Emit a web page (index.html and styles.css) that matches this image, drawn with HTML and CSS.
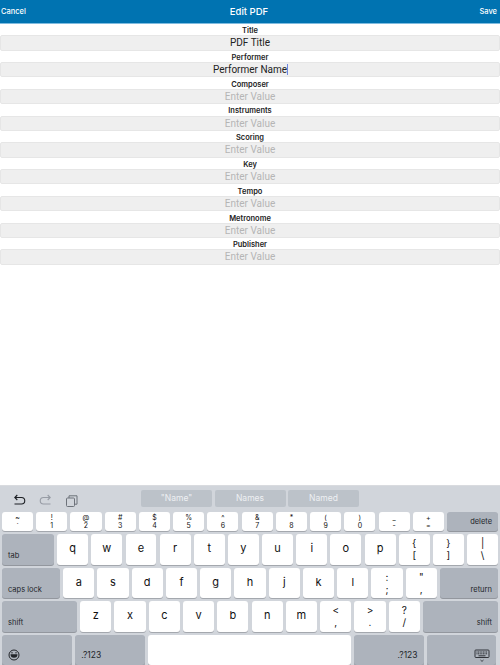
FILE: index.html
```html
<!DOCTYPE html>
<html lang="en">
<head>
  <meta charset="UTF-8">
  <meta name="viewport" content="width=device-width, initial-scale=1.0">
  <title>Edit PDF</title>
  <link rel="stylesheet" href="styles.css">
</head>
<body>
  <div class="page">
    <header class="topbar">
      <span class="topbar-btn">Cancel</span>
      <span class="topbar-title">Edit PDF</span>
      <span class="topbar-btn save">Save</span>
    </header>

    <form class="fields">
      <div class="field"><label>Title</label><div class="value">PDF Title</div></div>
      <div class="field"><label>Performer</label><div class="value">Performer Name<span class="caret"></span></div></div>
      <div class="field"><label>Composer</label><div class="value empty">Enter Value</div></div>
      <div class="field"><label>Instruments</label><div class="value empty">Enter Value</div></div>
      <div class="field"><label>Scoring</label><div class="value empty">Enter Value</div></div>
      <div class="field"><label>Key</label><div class="value empty">Enter Value</div></div>
      <div class="field"><label>Tempo</label><div class="value empty">Enter Value</div></div>
      <div class="field"><label>Metronome</label><div class="value empty">Enter Value</div></div>
      <div class="field"><label>Publisher</label><div class="value empty">Enter Value</div></div>
    </form>

    <div class="keyboard">
      <div class="assist">
        <div class="assist-icons">
          <svg class="icon" viewBox="0 0 14 14" fill="none" stroke="#1c1f24" stroke-width="1.1"><path d="M3 3.5h6.5a3 3 0 0 1 0 6.5H2.5"/><path d="M5.3 1L2.8 3.5l2.5 2.5"/></svg>
          <svg class="icon" viewBox="0 0 14 14" fill="none" stroke="#979ca5" stroke-width="1.1"><path d="M11 3.5H4.5a3 3 0 0 0 0 6.5h7"/><path d="M8.7 1l2.5 2.5L8.7 6"/></svg>
          <svg class="icon" viewBox="0 0 14 14" fill="none" stroke="#6d727a" stroke-width="1"><rect x="1.5" y="4" width="8" height="8.5" rx="1"/><path d="M4 4V1.8h8v8.4H9.5"/></svg>
        </div>
        <div class="suggestions">
          <span class="suggestion">"Name"</span>
          <span class="suggestion">Names</span>
          <span class="suggestion">Named</span>
        </div>
      </div>

      <div class="row num-row">
        <div class="key two"><span>~</span><span>`</span></div>
        <div class="key two"><span>!</span><span>1</span></div>
        <div class="key two"><span>@</span><span>2</span></div>
        <div class="key two"><span>#</span><span>3</span></div>
        <div class="key two"><span>$</span><span>4</span></div>
        <div class="key two"><span>%</span><span>5</span></div>
        <div class="key two"><span>^</span><span>6</span></div>
        <div class="key two"><span>&amp;</span><span>7</span></div>
        <div class="key two"><span>*</span><span>8</span></div>
        <div class="key two"><span>(</span><span>9</span></div>
        <div class="key two"><span>)</span><span>0</span></div>
        <div class="key two"><span>_</span><span>-</span></div>
        <div class="key two"><span>+</span><span>=</span></div>
        <div class="key mod delete">delete</div>
      </div>

      <div class="row">
        <div class="key mod tab">tab</div>
        <div class="key">q</div><div class="key">w</div><div class="key">e</div><div class="key">r</div><div class="key">t</div>
        <div class="key">y</div><div class="key">u</div><div class="key">i</div><div class="key">o</div><div class="key">p</div>
        <div class="key two big"><span>{</span><span>[</span></div>
        <div class="key two big"><span>}</span><span>]</span></div>
        <div class="key two big"><span>|</span><span>\</span></div>
      </div>

      <div class="row">
        <div class="key mod caps">caps lock</div>
        <div class="key">a</div><div class="key">s</div><div class="key">d</div><div class="key">f</div><div class="key">g</div>
        <div class="key">h</div><div class="key">j</div><div class="key">k</div><div class="key">l</div>
        <div class="key two big"><span>:</span><span>;</span></div>
        <div class="key two big"><span>"</span><span>,</span></div>
        <div class="key mod right return">return</div>
      </div>

      <div class="row">
        <div class="key mod shift">shift</div>
        <div class="key">z</div><div class="key">x</div><div class="key">c</div><div class="key">v</div><div class="key">b</div>
        <div class="key">n</div><div class="key">m</div>
        <div class="key two big"><span>&lt;</span><span>,</span></div>
        <div class="key two big"><span>&gt;</span><span>.</span></div>
        <div class="key two big"><span>?</span><span>/</span></div>
        <div class="key mod right shift">shift</div>
      </div>

      <div class="row">
        <div class="key mod bottom-key emoji">
          <svg class="emoji-icon" viewBox="0 0 12 12"><circle cx="6" cy="6" r="5" fill="none" stroke="#22252a" stroke-width="1"/><path d="M2.5 5.2h7a3.5 3.6 0 0 1-7 0z" fill="#22252a"/><path d="M3.2 3.8h1.6M7.2 3.8h1.6" stroke="#22252a" stroke-width="0.9"/></svg>
        </div>
        <div class="key mod bottom-key num">.?123</div>
        <div class="key space"></div>
        <div class="key mod right bottom-key num">.?123</div>
        <div class="key mod right bottom-key hide">
          <svg class="hide-icon" viewBox="0 0 16 14" fill="none" stroke="#22252a"><rect x="1" y="1" width="14" height="7.5" rx="0.8" stroke-width="0.9"/><path d="M2.5 3h11M2.5 4.8h11" stroke-width="1" stroke-dasharray="1 0.6"/><path d="M4.5 6.8h7" stroke-width="0.9"/><path d="M6.5 11l1.5 1.4L9.5 11" stroke-width="0.8"/></svg>
        </div>
      </div>
    </div>
  </div>
</body>
</html>
```

FILE: styles.css
```css
* {
  box-sizing: border-box;
}
html,
body {
  margin: 0;
  padding: 0;
}
body {
  font-family: Inter, "Liberation Sans", sans-serif;
  background-color: #fff;
  color: #111;
}
.page {
  width: 500px;
  height: 665px;
  display: flex;
  flex-direction: column;
  overflow: hidden;
}
.topbar {
  height: 24px;
  display: grid;
  grid-template-columns: 1fr auto 1fr;
  align-items: center;
  padding: 0 3px 1px 1px;
  background-color: #0073b1;
  border-bottom: 1px solid #7fbce0;
  color: #fff;
}
.topbar-btn {
  font-size: 7.5px;
  font-weight: 500;
}
.topbar-btn.save {
  text-align: right;
}
.topbar-title {
  font-size: 9.5px;
  font-weight: 500;
}
.fields {
  flex: 1;
  margin: 0;
  padding-top: 1px;
}
.field {
  height: 26.8px;
  display: flex;
  flex-direction: column;
}
.field label {
  height: 10.3px;
  line-height: 11px;
  font-size: 7.5px;
  font-weight: 600;
  text-align: center;
  color: #222;
}
.value {
  height: 15.4px;
  margin-top: -0.2px;
  line-height: 14.5px;
  font-family: Roboto, sans-serif;
  font-size: 10px;
  text-align: center;
  color: #222;
  background-color: #efefef;
  border: 1px solid #e6e6e6;
  border-radius: 2px;
}
.value.empty {
  color: #b5b5b5;
}
.caret {
  display: inline-block;
  width: 1px;
  height: 11px;
  margin-right: -1px;
  vertical-align: -2px;
  background-color: #6f86e0;
}
.keyboard {
  height: 180px;
  display: flex;
  flex-direction: column;
  padding: 0 2px;
  background-color: #d1d5db;
  border-top: 1px solid #d9dbdf;
}
.assist {
  height: 26px;
  display: flex;
  align-items: flex-start;
}
.assist-icons {
  width: 139px;
  display: flex;
  gap: 12.5px;
  padding: 8px 0 0 10px;
}
.icon {
  width: 14px;
  height: 14px;
}
.suggestions {
  display: flex;
  gap: 2.5px;
  padding-top: 4px;
}
.suggestion {
  width: 71px;
  height: 17px;
  line-height: 17px;
  font-size: 8.5px;
  text-align: center;
  color: #eef0f3;
  background-color: #bcc2c9;
  border-radius: 2px;
}
.row {
  height: 30.4px;
  margin-bottom: 3px;
  display: flex;
  gap: 3.2px;
}
.row.num-row {
  height: 19.5px;
  margin-bottom: 3px;
}
.key {
  flex: 1 1 0;
  min-width: 0;
  display: flex;
  align-items: center;
  justify-content: center;
  padding-bottom: 3px;
  font-size: 11px;
  color: #111;
  background-color: #fff;
  border-radius: 3px;
  box-shadow: 0 1px 0 #a4a8ae;
}
.key.two {
  flex-direction: column;
  padding-bottom: 0;
  font-size: 7px;
  line-height: 8px;
}
.key.big {
  font-size: 10px;
  line-height: 12px;
  padding-bottom: 1px;
}
.key.mod {
  flex: none;
  align-items: flex-end;
  justify-content: flex-start;
  padding: 0 6px 4.5px;
  font-size: 7.5px;
  line-height: 9px;
  color: #23262b;
  background-color: #adb3bc;
  box-shadow: 0 1px 0 #93979e;
}
.key.right {
  justify-content: flex-end;
}
.key.mod.delete {
  width: 51px;
  align-items: center;
  justify-content: flex-end;
  padding: 0 6px 0 0;
}
.tab {
  width: 52px;
}
.caps {
  width: 58px;
}
.return {
  width: 58px;
}
.shift {
  width: 75px;
}
.bottom-key {
  width: 69.5px;
}
.bottom-key.emoji {
  width: 70px;
}
.key.mod.num {
  font-size: 8.5px;
}
.space {
  flex: none;
  width: 203px;
}
.row:last-child {
  margin-bottom: 0;
}
.row:last-child .key {
  height: 30px;
}
.emoji-icon {
  width: 12px;
  height: 12px;
  margin-bottom: -1px;
}
.hide-icon {
  width: 16px;
  height: 14px;
  margin-bottom: -3px;
}
```
